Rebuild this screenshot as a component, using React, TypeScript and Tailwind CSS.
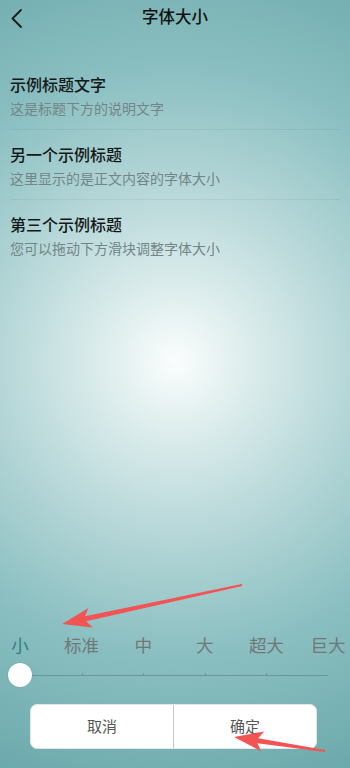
const font = { fontFamily: '"Noto Sans CJK SC", "Noto Sans", sans-serif' };

interface Sample {
  title: string;
  desc: string;
}

const samples: Sample[] = [
  { title: '示例标题文字', desc: '这是标题下方的说明文字' },
  { title: '另一个示例标题', desc: '这里显示的是正文内容的字体大小' },
  { title: '第三个示例标题', desc: '您可以拖动下方滑块调整字体大小' },
];

const sizes = ['小', '标准', '中', '大', '超大', '巨大'];

function Arrow({ x, y, len, angle }: { x: number; y: number; len: number; angle: number }) {
  const L = len;
  const pts = `0,-1 ${L - 24},-2.6 ${L - 29},-10 ${L},0 ${L - 29},10 ${L - 24},2.6 0,1`;
  return (
    <g transform={`translate(${x} ${y}) rotate(${angle})`}>
      <polygon points={pts} fill="#f25353" />
    </g>
  );
}

export default function App() {
  return (
    <div
      className="relative flex h-screen w-full flex-col overflow-hidden bg-[radial-gradient(circle_at_50%_47%,#fbfdfd_0%,#e1efef_14%,#b8d8d9_38%,#8cc0c2_65%,#6ca9ac_100%)]"
      style={font}
    >
      {/* Header */}
      <header className="relative flex h-[33px] items-center justify-center">
        <button className="absolute left-[6px] top-[5px] p-[2px]">
          <svg width="16" height="22" viewBox="0 0 16 22">
            <polyline points="13,3 4.5,11.5 13,20" fill="none" stroke="#1a1a1a" strokeWidth="1.8" strokeLinecap="round" strokeLinejoin="round" />
          </svg>
        </button>
        <h1 className="text-[16.5px] font-medium leading-none text-[#111]">字体大小</h1>
      </header>

      {/* Preview list */}
      <div className="px-[10px] pt-[27px]">
        {samples.map((s, i) => (
          <div
            key={s.title}
            className={`pt-[13px] pb-[11px] ${i < samples.length - 1 ? 'border-b border-black/[0.05]' : ''}`}
          >
            <div className="text-[16px] font-medium leading-[22px] text-[#141818]">{s.title}</div>
            <div className="mt-[3px] text-[14px] leading-[20px] text-[#738586]">{s.desc}</div>
          </div>
        ))}
      </div>

      <div className="flex-1" />

      {/* Size picker */}
      <div className="pl-[20px] pr-[22px]">
        <div className="flex justify-between">
          {sizes.map((s, i) => (
            <div key={s} className="flex w-0 justify-center">
              <span
                className={`whitespace-nowrap text-[17.5px] leading-[24px] ${i === 0 ? 'text-[#2c8184]' : 'text-[#6f7778]'}`}
              >
                {s}
              </span>
            </div>
          ))}
        </div>

        <div className="relative mt-[6px] flex h-[24px] items-center">
          <div className="relative h-px w-full bg-[#6c9597]">
            <div className="absolute left-[20%] top-[-2px] h-[3px] w-px bg-[#6c9597]" />
            <div className="absolute left-[40%] top-[-2px] h-[3px] w-px bg-[#6c9597]" />
            <div className="absolute left-[60%] top-[-2px] h-[3px] w-px bg-[#6c9597]" />
            <div className="absolute left-[80%] top-[-2px] h-[3px] w-px bg-[#6c9597]" />
          </div>
          <div className="absolute left-[-12px] top-0 h-[24px] w-[24px] rounded-full bg-white shadow-[0_0_2px_rgba(0,0,0,0.15)]" />
        </div>
      </div>

      {/* Buttons */}
      <div className="mb-[19px] mt-[17px] px-[30px] pr-[33px]">
        <div className="flex h-[45px] overflow-hidden rounded-[7px] border border-[#e2e6e6] bg-white">
          <button className="flex flex-1 items-center justify-center text-[15px] text-[#555]">取消</button>
          <div className="w-px bg-[#c4c4c4]" />
          <button className="flex flex-1 items-center justify-center text-[15px] text-[#555]">确定</button>
        </div>
      </div>

      {/* Annotation arrows */}
      <svg className="pointer-events-none absolute left-0 top-0" width="350" height="768">
        <Arrow x={242} y={585} len={184} angle={167.8} />
        <Arrow x={325} y={751} len={92} angle={-171.3} />
      </svg>
    </div>
  );
}
